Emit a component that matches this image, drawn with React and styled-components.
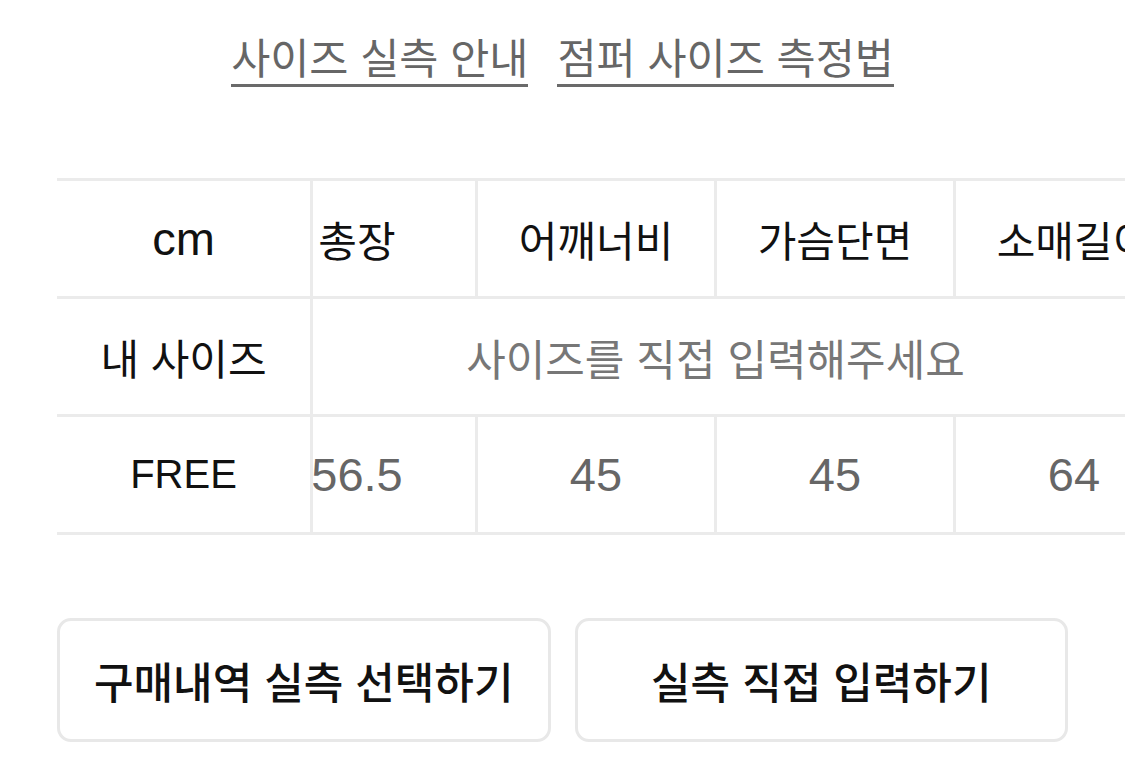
import React from "react";
import styled, { createGlobalStyle } from "styled-components";

const GlobalStyle = createGlobalStyle`
  body {
    margin: 0;
    background: #fff;
    font-family: "Liberation Sans", "Noto Sans CJK KR", sans-serif;
  }
`;

const Page = styled.div`
  width: 1125px;
  height: 759px;
  overflow: hidden;
  padding-top: 36px;
  box-sizing: border-box;
`;

const LinkRow = styled.div`
  display: flex;
  justify-content: center;
  gap: 29px;
`;

const GuideLink = styled.a`
  display: inline-block;
  font-size: 42.5px;
  line-height: 48px;
  color: #666;
  text-decoration: none;
  border-bottom: 3px solid #6a6a6a;
  cursor: pointer;
`;

const Table = styled.div`
  display: flex;
  margin: 91px 0 0 57px;
`;

const HeadCol = styled.div`
  width: 256px;
  flex-shrink: 0;
  border-right: 3px solid #ebebeb;
  border-top: 3px solid #ebebeb;
  box-sizing: border-box;
`;

const HeadCell = styled.div`
  height: 118px;
  display: flex;
  align-items: center;
  justify-content: center;
  border-bottom: 3px solid #ebebeb;
  box-sizing: border-box;
  font-size: ${({ size }) => size || 42}px;
  color: #111;
`;

const ScrollArea = styled.div`
  flex: 1;
  overflow: hidden;
`;

const ScrollInner = styled.div`
  margin-left: -74px;
  width: max-content;
  border-top: 3px solid #ebebeb;
`;

const Row = styled.div`
  display: flex;
  height: 118px;
`;

const Cell = styled.div`
  width: ${({ span }) => (span || 1) * 239}px;
  display: flex;
  align-items: center;
  justify-content: center;
  border-right: 3px solid #ebebeb;
  border-bottom: 3px solid #ebebeb;
  box-sizing: border-box;
  font-size: ${({ size }) => size || 42}px;
  color: ${({ muted }) => (muted ? "#666" : "#111")};
  white-space: nowrap;
`;

const Placeholder = styled(Cell)`
  color: #777;
  font-size: 43px;
`;

const ButtonRow = styled.div`
  display: flex;
  gap: 24px;
  padding: 0 57px;
  margin-top: 83px;
`;

const Button = styled.button`
  flex: 1;
  height: 124px;
  background: #fff;
  border: 3px solid #e8e8e8;
  border-radius: 14px;
  font-family: "Liberation Sans", "Noto Sans CJK KR", sans-serif;
  font-size: 43px;
  font-weight: 500;
  color: #111;
  cursor: pointer;
`;

const columns = ["총장", "어깨너비", "가슴단면", "소매길이"];
const values = ["56.5", "45", "45", "64"];

export default function App() {
  return (
    <>
      <GlobalStyle />
      <Page>
        <LinkRow>
          <GuideLink>사이즈 실측 안내</GuideLink>
          <GuideLink>점퍼 사이즈 측정법</GuideLink>
        </LinkRow>

        <Table>
          <HeadCol>
            <HeadCell size={47}>cm</HeadCell>
            <HeadCell>내 사이즈</HeadCell>
            <HeadCell size={40}>FREE</HeadCell>
          </HeadCol>
          <ScrollArea>
            <ScrollInner>
              <Row>
                {columns.map((c) => (
                  <Cell key={c}>{c}</Cell>
                ))}
              </Row>
              <Row>
                <Placeholder span={4}>사이즈를 직접 입력해주세요</Placeholder>
              </Row>
              <Row>
                {values.map((v, i) => (
                  <Cell key={i} size={47} muted>
                    {v}
                  </Cell>
                ))}
              </Row>
            </ScrollInner>
          </ScrollArea>
        </Table>

        <ButtonRow>
          <Button>구매내역 실측 선택하기</Button>
          <Button>실측 직접 입력하기</Button>
        </ButtonRow>
      </Page>
    </>
  );
}
